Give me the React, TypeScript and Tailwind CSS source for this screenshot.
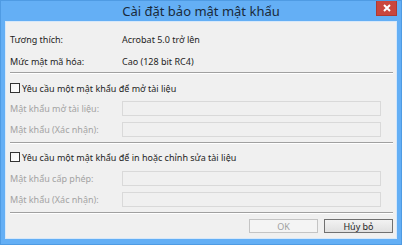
import React from 'react';

const font = { fontFamily: '"Noto Sans", "Open Sans", sans-serif' };

function Separator() {
  return (
    <div className="mr-[3px] ml-[4px] flex flex-col">
      <div className="h-px bg-[#a0a0a0]" />
      <div className="h-px bg-white" />
    </div>
  );
}

function Checkbox({ label }: { label: string }) {
  return (
    <div className="flex h-[24px] items-center pl-[4px]">
      <span className="h-[10px] w-[10px] border border-[#333333] bg-gradient-to-br from-[#f4f4f4] to-white" />
      <span className="ml-[2px] text-[#1e1e1e]">{label}</span>
    </div>
  );
}

function Field({ label, className }: { label: string; className: string }) {
  return (
    <div className={`flex h-[15px] items-center pl-[4px] ${className}`}>
      <span className="w-[112px] text-[#a3a3a3]">{label}</span>
      <div className="h-[15px] w-[259px] border border-[#d9d9d9] bg-[#f0f0f0]" />
    </div>
  );
}

export default function App() {
  return (
    <div
      className="flex h-[245px] w-[402px] flex-col border border-[#4f9be3] bg-[#64aff5] text-[9px] leading-none"
      style={font}
    >
      {/* title bar */}
      <div className="relative flex h-[20px] items-center justify-center">
        <span className="text-[13px] text-[#1a2a3a]">Cài đặt bảo mật mật khẩu</span>
        <div className="absolute right-[4px] top-0 flex h-[15px] w-[21px] items-center justify-center border border-[#b03a31] border-t-0 bg-[#c9463d]">
          <svg width="8" height="8" viewBox="0 0 8 8">
            <path d="M1 1 L7 7 M7 1 L1 7" stroke="white" strokeWidth="2" />
          </svg>
        </div>
      </div>

      {/* client area */}
      <div className="mx-[4px] flex h-[218px] flex-col border border-[#d6e8fa] bg-[#f0f0f0]">
        <div className="mt-[6px] flex h-[22px] items-center pl-[4px] text-[#1e1e1e]">
          <span className="w-[112px]">Tương thích:</span>
          <span>Acrobat 5.0 trở lên</span>
        </div>
        <div className="flex h-[22px] items-center pl-[4px] text-[#1e1e1e]">
          <span className="w-[112px]">Mức mật mã hóa:</span>
          <span>Cao (128 bit RC4)</span>
        </div>
        <Separator />

        <div className="mt-[2px]">
          <Checkbox label="Yêu cầu một mật khẩu để mở tài liệu" />
        </div>
        <Field label="Mật khẩu mở tài liệu:" className="mt-[1px]" />
        <Field label="Mật khẩu (Xác nhận):" className="mt-[6px]" />
        <div className="mt-[5px]">
          <Separator />
        </div>

        <div className="mt-[1px]">
          <Checkbox label="Yêu cầu một mật khẩu để in hoặc chỉnh sửa tài liệu" />
        </div>
        <Field label="Mật khẩu cấp phép:" className="mt-[2px]" />
        <Field label="Mật khẩu (Xác nhận):" className="mt-[6px]" />
        <div className="mt-[5px]">
          <Separator />
        </div>

        <div className="mt-[5px] flex justify-end gap-[6px] pr-[3px]">
          <button className="h-[14px] w-[69px] border border-[#c4c4c4] bg-[#f4f4f4] text-[#a0a0a0]">
            OK
          </button>
          <button className="h-[14px] w-[69px] border border-[#707070] bg-gradient-to-b from-[#f2f2f2] to-[#e0e0e0] text-[#1e1e1e]">
            Hủy bỏ
          </button>
        </div>
      </div>
    </div>
  );
}
